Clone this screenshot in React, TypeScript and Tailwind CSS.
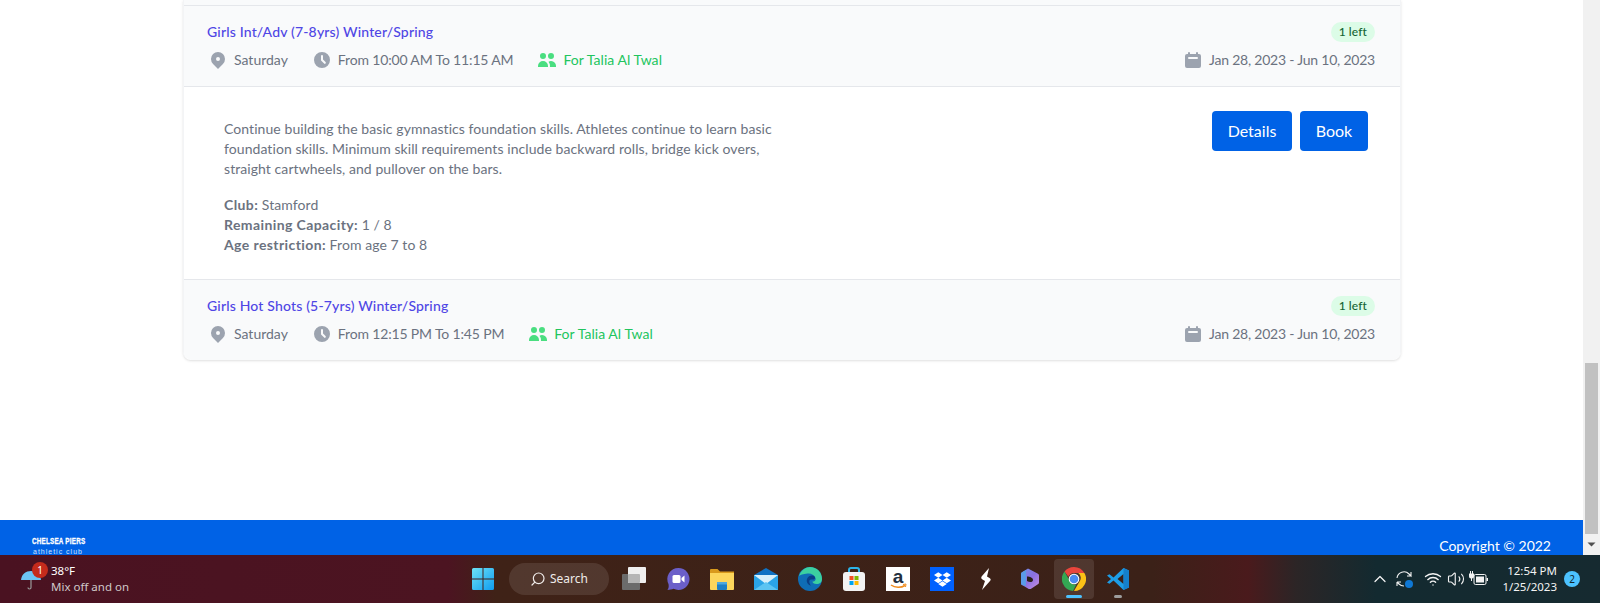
import { HiCalendar, HiClock, HiLocationMarker, HiUsers } from 'react-icons/hi';
import { FaDropbox } from 'react-icons/fa';
import { ChevronUp, Search, Volume2, Wifi } from 'lucide-react';

const Meta = ({ time }: { time: string }) => {
  return (
    <div className="mt-2 flex h-5 items-center justify-between text-sm text-[#6b7280]">
      <div className="flex items-center gap-6">
        <div className="flex items-center gap-1.5">
          <HiLocationMarker className="h-5 w-5 text-[#9ca3af]" />
          <span>Saturday</span>
        </div>
        <div className="flex items-center gap-1.5">
          <HiClock className="h-5 w-5 text-[#9ca3af]" />
          <span className="tracking-[-0.16px]">{time}</span>
        </div>
        <div className="flex items-center gap-1.5 text-[#22c55e]">
          <HiUsers className="h-5 w-5 text-[#4ade80]" />
          <span className="tracking-[0.05px]">For Talia Al Twal</span>
        </div>
      </div>
      <div className="flex items-center gap-1.5">
        <HiCalendar className="h-5 w-5 text-[#9ca3af]" />
        <span className="tracking-[-0.22px]">Jan 28, 2023 - Jun 10, 2023</span>
      </div>
    </div>
  );
};

const Row = ({ title, time, last }: { title: string; time: string; last?: boolean }) => {
  return (
    <div className={`bg-[#f9fafb] pb-4 pl-6 pr-[25px] pt-4 ${last ? 'rounded-b-lg' : 'border-b border-[#e5e7eb]'}`}>
      <div className="flex h-5 items-center justify-between">
        <span className="-ml-px text-sm font-medium tracking-[0.17px] text-[#4f46e5]">{title}</span>
        <span className="flex h-5 items-center rounded-full bg-[#dcfce7] px-2 text-xs font-medium tracking-[0.1px] text-[#166534]">1 left</span>
      </div>
      <Meta time={time} />
    </div>
  );
};

const Panel = () => {
  return (
    <div className="flex justify-between border-b border-[#e5e7eb] bg-white pb-6 pl-10 pr-8 pt-6">
      <div className="w-[576px] pt-2 text-sm tracking-[0.07px] text-[#6b7280]">
        <p>
          Continue building the basic gymnastics foundation skills. Athletes continue to learn basic foundation skills.
          Minimum skill requirements include backward rolls, bridge kick overs, straight cartwheels, and pullover on the
          bars.
        </p>
        <div className="mt-4">
          <p><strong className="font-bold tracking-[0.4px]">Club:</strong> Stamford</p>
          <p><strong className="font-bold tracking-[0.4px]">Remaining Capacity:</strong> 1 / 8</p>
          <p><strong className="font-bold tracking-[0.4px]">Age restriction:</strong> From age 7 to 8</p>
        </div>
      </div>
      <div className="flex gap-2">
        <button className="h-10 w-20 rounded bg-[#0062e6] text-base text-white">Details</button>
        <button className="h-10 w-[68px] rounded bg-[#0062e6] text-base text-white">Book</button>
      </div>
    </div>
  );
};

const Footer = () => {
  return (
    <footer className="flex h-[35px] shrink-0 items-start justify-between overflow-hidden bg-[#0062e6] pl-8 pr-8 text-white">
      <div className="w-[52px] pt-[17px] leading-none">
        <div className="origin-left scale-x-[0.74] whitespace-nowrap font-['Liberation_Sans',sans-serif] text-[8.5px] font-bold tracking-[0.3px] [-webkit-text-stroke:0.3px_white]">CHELSEA PIERS</div>
        <div className="mt-[2px] whitespace-nowrap pl-px font-['Liberation_Sans',sans-serif] text-[7px] tracking-[1px] text-[#cfe2ff]">athletic club</div>
      </div>
      <span className="pt-[16px] text-sm leading-5">Copyright © 2022</span>
    </footer>
  );
};

const Scrollbar = () => {
  return (
    <div className="flex w-[17px] shrink-0 flex-col items-center bg-[#f1f1f1]">
      <div className="mt-[363px] h-[171px] w-[13px] bg-[#c1c1c1]" />
      <svg viewBox="0 0 17 21" className="h-[21px] w-[17px]">
        <path d="M4.5 8.5h8l-4 4z" fill="#505050" />
      </svg>
    </div>
  );
};

const WinLogo = () => (
  <svg viewBox="0 0 24 24" className="h-6 w-6">
    <defs>
      <linearGradient id="win" x1="0" y1="0" x2="1" y2="1">
        <stop offset="0" stopColor="#6ee2f5" />
        <stop offset="1" stopColor="#0f9cf0" />
      </linearGradient>
    </defs>
    <path d="M1 2.5A1.5 1.5 0 0 1 2.5 1H11.500v10.500H1zM12.500 1h9A1.500 1.500 0 0 1 23 2.500v9H12.500zM1 12.500h10.500V23h-9A1.500 1.500 0 0 1 1 21.500zM12.500 12.500H23v9a1.500 1.500 0 0 1-1.500 1.500h-9z" fill="url(#win)" />
  </svg>
);

const TaskView = () => (
  <svg viewBox="0 0 24 24" className="h-6 w-6">
    <rect x="0" y="7" width="18" height="16" rx="1" fill="#6b6b6b" />
    <rect x="6" y="0" width="18" height="16" rx="1" fill="#efefef" />
    <rect x="6" y="7" width="12" height="9" rx="1" fill="#b5b5b5" />
  </svg>
);

const Meet = () => (
  <svg viewBox="0 0 24 24" className="h-6 w-6">
    <path d="M12.500 1a11 11 0 1 1-5 20.800C6 22.500 3.500 23 1.500 23c1-1.500 1.500-3 1-6A11 11 0 0 1 12.500 1z" fill="#6b5fc9" />
    <rect x="6.500" y="8" width="8" height="8" rx="1.500" fill="#fff" />
    <path d="M15.500 11l3-2.500v7l-3-2.500z" fill="#fff" />
  </svg>
);

const Folder = () => (
  <svg viewBox="0 0 24 24" className="h-6 w-6">
    <path d="M0 3a1 1 0 0 1 1-1h6.500l2.500 2.500h14V8H0z" fill="#d99a1c" />
    <path d="M0 6h24v16a1 1 0 0 1-1 1H1a1 1 0 0 1-1-1z" fill="#fcd65c" />
    <rect x="7" y="15" width="10" height="8" rx="1" fill="#1f7fc4" />
    <rect x="7" y="15" width="10" height="2.500" fill="#4fa8dc" />
  </svg>
);

const Mail = () => (
  <svg viewBox="0 0 24 24" className="h-6 w-6">
    <path d="M0 8l12-7 12 7v15H0z" fill="#0f72c4" />
    <path d="M0 8h24v15H0z" fill="#2aa4e8" />
    <path d="M0 8h24L12 17z" fill="#d7f0fb" />
    <path d="M0 23l12-8 12 8z" fill="#5cc4f2" />
  </svg>
);

const Edge = () => (
  <svg viewBox="0 0 24 24" className="h-6 w-6">
    <circle cx="12" cy="12" r="12" fill="#0f6db5" />
    <path d="M1 9C3 3 8 0 12 0c7 0 12 5 12 12 0 3-2 5-5.500 5-2.500 0-4-1-4-2.500 3 0 3.500-2 3-3.500C16 7.500 13 6 9.500 6.500 5 7 2 8 1 9z" fill="#3cd0a0" />
    <path d="M9 12c1-3 4-4 6-3.500 1.500.5 2.500 2 2 3-1 1.500-3 1-4 1-2 0-2.500 3 0 6-3-.500-5-3.500-4-6.500z" fill="#0a3f86" />
  </svg>
);

const Store = () => (
  <svg viewBox="0 0 24 24" className="h-6 w-6">
    <path d="M7 6V3a2 2 0 0 1 2-2h6a2 2 0 0 1 2 2v3" stroke="#2cb5ea" strokeWidth="2" fill="none" />
    <rect x="1" y="5" width="22" height="19" rx="3" fill="#f3f3f3" />
    <rect x="7.500" y="9" width="4" height="4" fill="#f25022" />
    <rect x="12.500" y="9" width="4" height="4" fill="#7fba00" />
    <rect x="7.500" y="14" width="4" height="4" fill="#00a4ef" />
    <rect x="12.500" y="14" width="4" height="4" fill="#ffb900" />
  </svg>
);

const Amazon = () => (
  <div className="relative flex h-6 w-6 justify-center bg-white font-['Liberation_Sans',sans-serif] text-[19px] font-bold leading-[19px] text-[#232f3e]">
    a
    <svg viewBox="0 0 24 24" className="absolute inset-0 h-6 w-6">
      <path d="M5 18c4 3 10 3 14 .500" stroke="#f08c1e" strokeWidth="1.500" fill="none" />
      <path d="M17 17.500l3-.500-.500 3" stroke="#f08c1e" strokeWidth="1" fill="none" />
    </svg>
  </div>
);

const Dropbox = () => (
  <div className="flex h-6 w-6 items-center justify-center bg-[#0061fe]">
    <FaDropbox className="h-[17px] w-[17px] text-white" />
  </div>
);

const Sublime = () => (
  <svg viewBox="0 0 24 24" className="h-6 w-6">
    <path d="M15 1L8 9c-1.200 1.500-1 2.500.500 3.500l2.500 1.500-3 9 8-9c1-1.200 1-2-.5-3l-2.500-1.500z" fill="#fff" />
  </svg>
);

const Hexa = () => (
  <svg viewBox="0 0 24 24" className="h-6 w-6">
    <defs>
      <linearGradient id="hex" x1="0" y1="0" x2="1" y2="1">
        <stop offset="0" stopColor="#6f8fe8" />
        <stop offset="0.500" stopColor="#8a6fe0" />
        <stop offset="1" stopColor="#c88fe0" />
      </linearGradient>
    </defs>
    <path d="M10 1.500l9.500 5a2 2 0 0 1 1.500 2v7a2 2 0 0 1-1.500 2l-6 4c-1.500 1-3 .500-3.500 0L4 18a2 2 0 0 1-1-2V7a2 2 0 0 1 1-1.700z" fill="url(#hex)" />
    <path d="M9 9.500c3 0 6 1.500 6 3.500s-3 3-6 1z" fill="#2a1f18" />
    <path d="M3 7a2 2 0 0 1 1-1.700L8 3v16l-4-1a2 2 0 0 1-1-2z" fill="#5a9be8" />
  </svg>
);

const Chrome = () => (
  <svg viewBox="0 0 24 24" className="h-6 w-6">
    <path d="M12 0a12 12 0 0 1 10.400 6H12a6 6 0 0 0-5.600 3.800L2.500 4.600A12 12 0 0 1 12 0z" fill="#e8453c" />
    <path d="M22.400 6A12 12 0 0 1 12 24l5.200-9a6 6 0 0 0-1-9z" fill="#fbc116" />
    <path d="M2.500 4.600l5.200 9.400a6 6 0 0 0 6.500 3.500L11 24A12 12 0 0 1 2.500 4.600z" fill="#34a853" />
    <circle cx="12" cy="12" r="5.300" fill="#fff" />
    <circle cx="12" cy="12" r="4.300" fill="#4a8bf0" />
  </svg>
);

const VsCode = () => (
  <svg viewBox="0 0 24 24" className="h-6 w-6">
    <path d="M17.500 1L23 3.500v17L17.500 23 7.500 13.500l-4 3.300L1 15.500 5 12 1 8.500l2.500-1.300 4 3.300z" fill="#1e9de6" />
    <path d="M17.500 7l-6 5 6 5z" fill="#3a2019" />
    <path d="M17.500 1L23 3.500v17L17.500 23z" fill="#1580cc" />
  </svg>
);

const Sync = () => (
  <svg viewBox="0 0 20 20" className="h-5 w-5" fill="none" stroke="#f3f3f3" strokeWidth="1.100">
    <path d="M3 9a7 7 0 0 1 12-4l2 2V3M17 7h-4" />
    <path d="M3 13v4M3 13h4M3 13l2 2a7 7 0 0 0 5 2" />
    <circle cx="15" cy="15" r="4" fill="#0f78d4" stroke="none" />
  </svg>
);

const Battery = () => (
  <svg viewBox="0 0 20 20" className="h-5 w-5" fill="#f3f3f3">
    <rect x="6" y="5.500" width="12" height="10" rx="1.500" fill="none" stroke="#f3f3f3" />
    <rect x="8" y="7.500" width="8" height="6" />
    <rect x="18.500" y="9" width="1.500" height="3" />
    <path d="M1 4.500h5v3a2 2 0 0 1-2 2h-1a2 2 0 0 1-2-2zM2 2h1v2.500H2zM4 2h1v2.500H4zM3 9h1v3H3z" />
  </svg>
);

const Umbrella = () => (
  <svg viewBox="0 0 22 24" className="h-6 w-[22px]">
    <path d="M1 13C1.500 7 6 4 11 4s9.500 3 10 9z" fill="#6cc4f5" />
    <path d="M11 13v7.500a1.500 1.500 0 0 1-3 0" stroke="#9a9a9a" strokeWidth="1.200" fill="none" />
  </svg>
);

const Slot = ({ children, active, open }: { children: React.ReactNode; active?: boolean; open?: boolean }) => {
  return (
    <div className={`relative mx-0.5 flex h-10 w-10 items-center justify-center rounded ${active ? 'bg-white/10' : ''}`}>
      {children}
      {active && <div className="absolute bottom-[1px] h-[3px] w-4 rounded-full bg-[#4cc2ff]" />}
      {open && <div className="absolute bottom-[1px] h-[3px] w-2 rounded-full bg-[#9d9d9d]" />}
    </div>
  );
};

const Taskbar = () => {
  return (
    <div className="flex h-12 shrink-0 items-center bg-[linear-gradient(90deg,#4a1221_0%,#4c1421_28%,#3f2217_31%,#3b2118_72%,#4a1a1c_78%,#2c2526_81%,#132a30_86%,#162a30_100%)] font-['Noto_Sans',sans-serif] text-[11.5px] text-white">
      <div className="flex w-[461px] shrink-0 items-center pl-5">
        <div className="relative mr-[9px] h-6 w-[22px]">
          <Umbrella />
          <span className="absolute -right-[6px] -top-[5px] flex h-4 w-4 items-center justify-center rounded-full bg-[#c42b1c] text-[10px]">1</span>
        </div>
        <div className="leading-4">
          <div>38°F</div>
          <div className="text-[#cfc8c9]">Mix off and on</div>
        </div>
      </div>
      <div className="flex w-11 justify-center"><WinLogo /></div>
      <div className="ml-1 mr-[3px] flex h-8 w-[100px] items-center justify-center gap-1 rounded-full bg-white/10 text-[12px] text-[#f0ecea]">
        <Search className="h-4 w-4 -scale-x-100" strokeWidth={1.800} />
        <span>Search</span>
      </div>
      <Slot><TaskView /></Slot>
      <Slot><Meet /></Slot>
      <Slot><Folder /></Slot>
      <Slot><Mail /></Slot>
      <Slot><Edge /></Slot>
      <Slot><Store /></Slot>
      <Slot><Amazon /></Slot>
      <Slot><Dropbox /></Slot>
      <Slot><Sublime /></Slot>
      <Slot><Hexa /></Slot>
      <Slot active><Chrome /></Slot>
      <Slot open><VsCode /></Slot>
      <div className="ml-auto flex items-center pr-5">
        <ChevronUp className="mr-[4px] h-5 w-5 text-[#f3f3f3]" strokeWidth={1.500} />
        <div className="mr-[10px]"><Sync /></div>
        <Wifi className="mr-[5px] h-[18px] w-[18px] text-[#f3f3f3]" strokeWidth={1.800} />
        <Volume2 className="mr-[3px] h-[18px] w-[18px] text-[#f3f3f3]" strokeWidth={1.500} />
        <Battery />
        <div className="ml-[14px] text-right leading-4 text-[#f3f3f3]">
          <div>12:54 PM</div>
          <div>1/25/2023</div>
        </div>
        <span className="ml-[7px] flex h-4 w-4 items-center justify-center rounded-full bg-[#4cc2ff] text-[10px] text-[#10232a]">2</span>
      </div>
    </div>
  );
};

const App = () => {
  return (
    <div className="flex h-[603px] w-[1600px] flex-col overflow-hidden bg-white font-['Lato',sans-serif]">
      <div className="flex min-h-0 flex-1">
        <div className="flex min-w-0 flex-1 flex-col">
          <div className="flex-1 pl-[183px] pr-[182px]">
            <div className="rounded-b-lg border-x border-[#f3f4f6] shadow">
              <div className="h-[5px] bg-[#f9fafb]" />
              <div className="border-t border-[#e5e7eb]">
                <Row title="Girls Int/Adv (7-8yrs) Winter/Spring" time="From 10:00 AM To 11:15 AM" />
                <Panel />
                <Row title="Girls Hot Shots (5-7yrs) Winter/Spring" time="From 12:15 PM To 1:45 PM" last />
              </div>
            </div>
          </div>
          <Footer />
        </div>
        <Scrollbar />
      </div>
      <Taskbar />
    </div>
  );
};

export default App;
